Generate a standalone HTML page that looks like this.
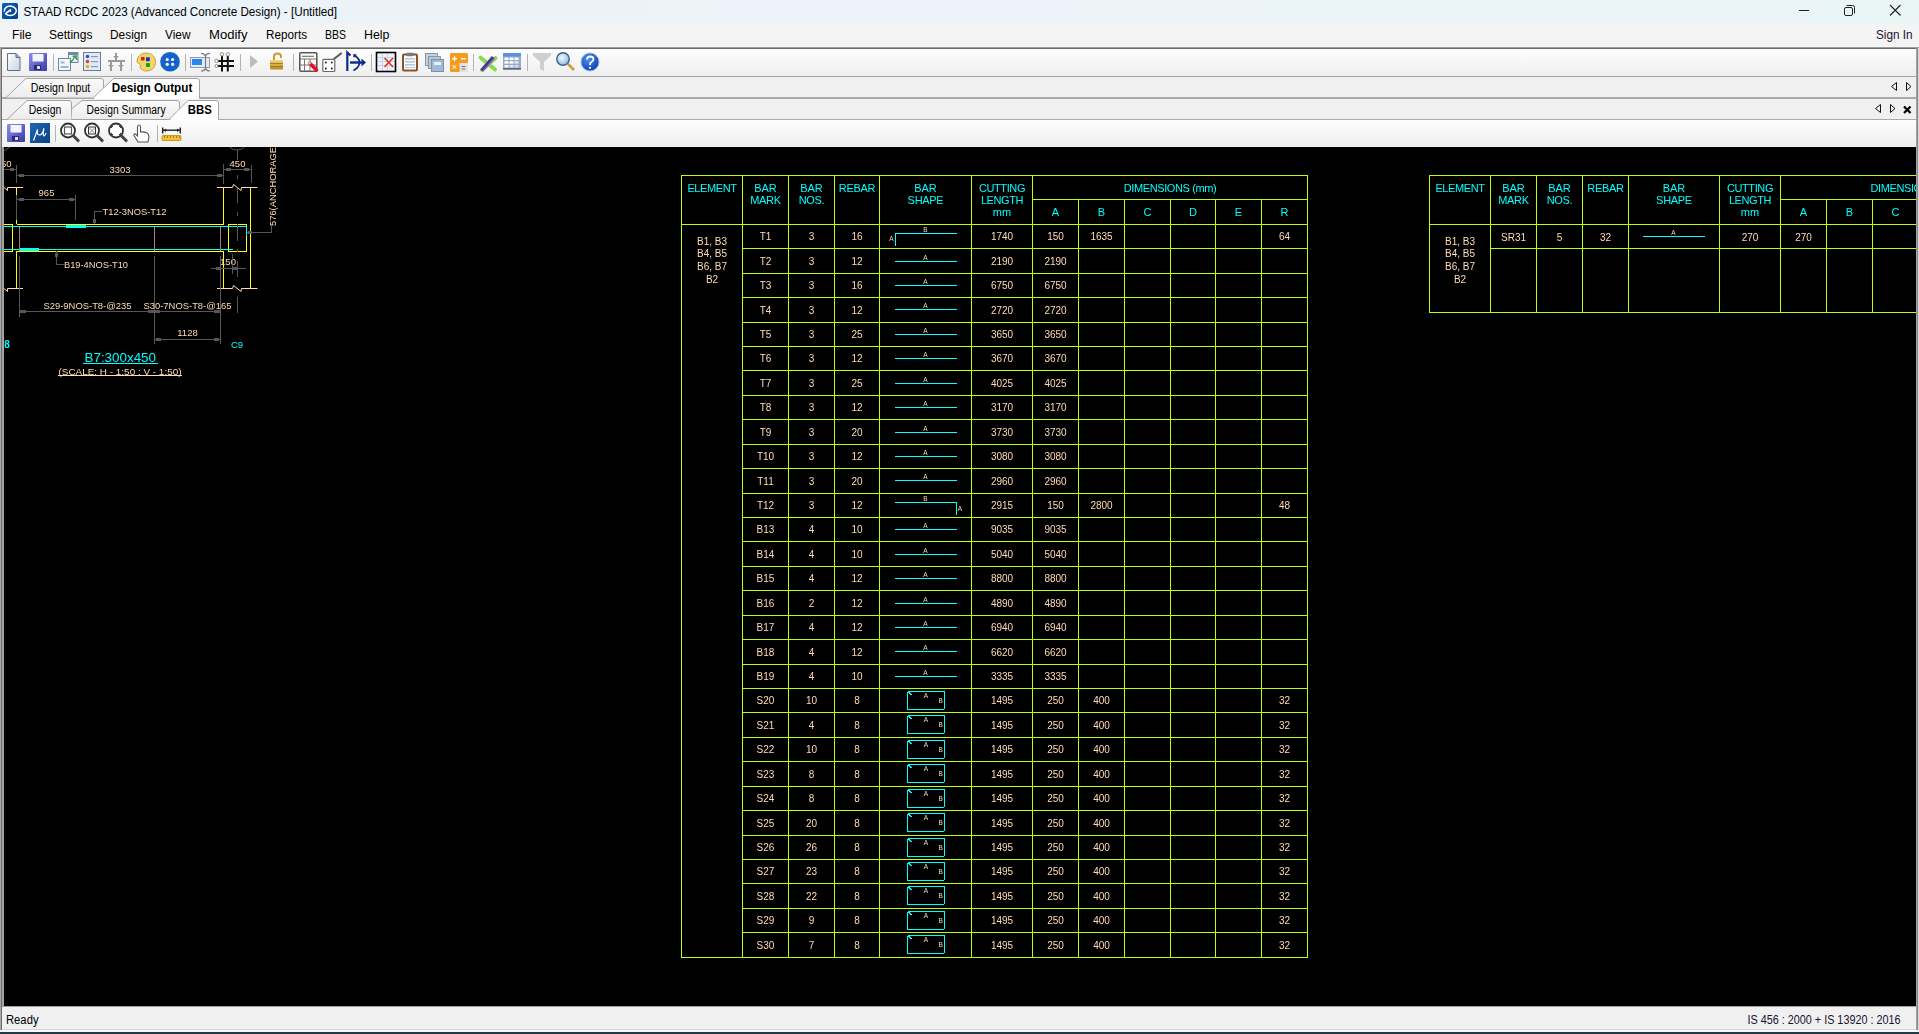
<!DOCTYPE html><html><head><meta charset="utf-8"><title>STAAD RCDC</title><style>html,body{margin:0;padding:0;}body{width:1919px;height:1034px;overflow:hidden;position:relative;background:#f0f0f0;font-family:"Liberation Sans",sans-serif;}text{font-family:"Liberation Sans",sans-serif;}</style></head><body><svg width="1919" height="1034" viewBox="0 0 1919 1034" style="position:absolute;left:0;top:0" font-family="Liberation Sans, sans-serif">
<clipPath id="cv"><rect x="4" y="147" width="1912" height="859"/></clipPath>
<defs><linearGradient id="tg" x1="0" x2="1" y1="0" y2="0"><stop offset="0" stop-color="#eaf3f7"/><stop offset="0.5" stop-color="#ecf3fa"/><stop offset="1" stop-color="#eaf5f6"/></linearGradient><linearGradient id="tb" x1="0" x2="0" y1="0" y2="1"><stop offset="0" stop-color="#fdfdfd"/><stop offset="1" stop-color="#efefef"/></linearGradient><linearGradient id="tab" x1="0" x2="0" y1="0" y2="1"><stop offset="0" stop-color="#fafafa"/><stop offset="1" stop-color="#ececec"/></linearGradient><linearGradient id="ic1" x1="0" x2="1" y1="0" y2="1"><stop offset="0" stop-color="#0b62b3"/><stop offset="1" stop-color="#063f8c"/></linearGradient></defs>
<rect x="0" y="0" width="1919" height="23" fill="url(#tg)"/>
<rect x="2" y="3" width="16" height="16" rx="1.6" fill="url(#ic1)"/>
<path d="M4.4 11.6 A6 4.7 0 1 1 5.6 13.7 L10.4 9.8 V11.9" stroke="#fff" stroke-width="1.5" fill="none" stroke-linejoin="round"/>
<text x="23.5" y="16" font-size="12" fill="#000" text-anchor="start" textLength="313.5" lengthAdjust="spacingAndGlyphs">STAAD RCDC 2023 (Advanced Concrete Design) - [Untitled]</text>
<rect x="1799" y="10" width="10" height="1" fill="#222"/>
<rect x="1844.5" y="7.5" width="8" height="8" rx="1.5" fill="none" stroke="#222" stroke-width="1"/>
<path d="M1846.5 5.5 H1852.5 Q1854.5 5.5 1854.5 7.5 V13.5" fill="none" stroke="#222" stroke-width="1"/>
<path d="M1890 5 L1900.5 15.5 M1900.5 5 L1890 15.5" stroke="#222" stroke-width="1.1"/>
<rect x="0" y="23" width="1919" height="24" fill="#f4f4f4"/>
<rect x="0" y="46" width="1919" height="1" fill="#f8f8f8"/>
<text x="12" y="38.7" font-size="12" fill="#000" text-anchor="start" textLength="19.5" lengthAdjust="spacingAndGlyphs">File</text>
<text x="49" y="38.7" font-size="12" fill="#000" text-anchor="start" textLength="43.5" lengthAdjust="spacingAndGlyphs">Settings</text>
<text x="110" y="38.7" font-size="12" fill="#000" text-anchor="start" textLength="37" lengthAdjust="spacingAndGlyphs">Design</text>
<text x="165" y="38.7" font-size="12" fill="#000" text-anchor="start" textLength="25.5" lengthAdjust="spacingAndGlyphs">View</text>
<text x="209" y="38.7" font-size="12" fill="#000" text-anchor="start" textLength="38.5" lengthAdjust="spacingAndGlyphs">Modify</text>
<text x="266" y="38.7" font-size="12" fill="#000" text-anchor="start" textLength="41" lengthAdjust="spacingAndGlyphs">Reports</text>
<text x="325" y="38.7" font-size="12" fill="#000" text-anchor="start" textLength="21" lengthAdjust="spacingAndGlyphs">BBS</text>
<text x="364" y="38.7" font-size="12" fill="#000" text-anchor="start" textLength="25.5" lengthAdjust="spacingAndGlyphs">Help</text>
<text x="1876" y="38.7" font-size="12" fill="#1a1030" text-anchor="start" textLength="36.5" lengthAdjust="spacingAndGlyphs">Sign In</text>
<rect x="0" y="47" width="1919" height="1" fill="#9c9c9c"/>
<rect x="0" y="48" width="1919" height="1" fill="#6a6a6a"/>
<rect x="2" y="49" width="1914" height="27" fill="url(#tb)"/>
<rect x="2" y="76" width="1914" height="1" fill="#a6a6a6"/>
<rect x="2" y="77" width="1914" height="20" fill="#f0f0f0"/>
<rect x="2" y="97" width="1914" height="2" fill="#a9a9a9"/>
<rect x="2" y="99" width="1914" height="20" fill="#f0f0f0"/>
<rect x="2" y="119" width="1914" height="1" fill="#a9a9a9"/>
<rect x="2" y="120" width="1914" height="27" fill="url(#tb)"/>
<rect x="0" y="48" width="1" height="983" fill="#a9a9a9"/>
<rect x="1" y="48" width="1" height="983" fill="#6c6c6c"/>
<rect x="1916" y="48" width="1" height="983" fill="#a0a0a0"/>
<rect x="1917" y="48" width="1" height="983" fill="#8c8c8c"/>
<rect x="1918" y="48" width="1" height="983" fill="#d4d4d4"/>
<path d="M6 97.5 L26 78.5 H101 Q103.5 78.5 103.5 81 V97.5" fill="url(#tab)" stroke="#a3a3a3" stroke-width="1"/>
<path d="M93 98 L113.5 78.5 H197 Q199.5 78.5 199.5 81 V98" fill="#ffffff" stroke="#a3a3a3" stroke-width="1"/>
<rect x="94" y="97" width="105" height="2" fill="#ffffff"/>
<text x="30.8" y="92" font-size="12" fill="#000" text-anchor="start" textLength="59.5" lengthAdjust="spacingAndGlyphs">Design Input</text>
<text x="111.8" y="92" font-size="12" fill="#000" text-anchor="start" font-weight="bold" textLength="80.5" lengthAdjust="spacingAndGlyphs">Design Output</text>
<path d="M7 119.5 L27 100.5 H69 Q71.5 100.5 71.5 103 V119.5" fill="url(#tab)" stroke="#a3a3a3" stroke-width="1"/>
<path d="M72 108.6 L82 100.5 H177 Q179.5 100.5 179.5 103 V119.5 H71.5" fill="url(#tab)" stroke="#a3a3a3" stroke-width="1"/>
<path d="M169 119.5 L188 100.5 H216 Q218.5 100.5 218.5 103 V119.5" fill="#ffffff" stroke="#a3a3a3" stroke-width="1"/>
<rect x="171" y="119" width="47" height="2" fill="#ffffff"/>
<text x="28.8" y="114" font-size="12" fill="#000" text-anchor="start" textLength="32.5" lengthAdjust="spacingAndGlyphs">Design</text>
<text x="86.6" y="114" font-size="12" fill="#000" text-anchor="start" textLength="79" lengthAdjust="spacingAndGlyphs">Design Summary</text>
<text x="187.8" y="114" font-size="12" fill="#000" text-anchor="start" font-weight="bold" textLength="24" lengthAdjust="spacingAndGlyphs">BBS</text>
<path d="M1896.5 82.5 V90.5 L1891.5 86.5 Z M1906.5 82.5 V90.5 L1911 86.5 Z" fill="none" stroke="#111" stroke-width="1"/>
<path d="M1880.5 104.5 V112.5 L1875.5 108.5 Z M1890.5 104.5 V112.5 L1895 108.5 Z" fill="none" stroke="#111" stroke-width="1"/>
<path d="M1904 106.5 L1910.5 113 M1910.5 106.5 L1904 113" stroke="#000" stroke-width="2.2"/>
<rect x="4" y="147" width="1912" height="859" fill="#000"/>
<rect x="2" y="147" width="2" height="860" fill="#a3a3a3"/>
<rect x="2" y="1006" width="1914" height="1" fill="#a0a0a0"/>
<rect x="2" y="1007" width="1914" height="22" fill="#f0f0f0"/>
<rect x="2" y="1029" width="1914" height="1" fill="#d8d8d8"/>
<rect x="0" y="1030" width="1919" height="2" fill="#f6f6f6"/>
<rect x="0" y="1032" width="1919" height="2" fill="#1d3b42"/>
<text x="6" y="1024" font-size="12" fill="#000" text-anchor="start" textLength="32.5" lengthAdjust="spacingAndGlyphs">Ready</text>
<text x="1747.5" y="1024" font-size="12" fill="#1a1030" text-anchor="start" textLength="153" lengthAdjust="spacingAndGlyphs">IS 456 : 2000 + IS 13920 : 2016</text>
<defs><linearGradient id="gDoc" x1="0" y1="0" x2="1" y2="1"><stop offset="0" stop-color="#ffffff"/><stop offset="1" stop-color="#c9d3e0"/></linearGradient><linearGradient id="gFlop" x1="0" y1="0" x2="1" y2="1"><stop offset="0" stop-color="#8f8ff0"/><stop offset="1" stop-color="#3a3aa8"/></linearGradient><linearGradient id="gBlueC" x1="0" y1="0" x2="0" y2="1"><stop offset="0" stop-color="#2f7be0"/><stop offset="1" stop-color="#1852b8"/></linearGradient><linearGradient id="gGold" x1="0" y1="0" x2="0" y2="1"><stop offset="0" stop-color="#f3d77a"/><stop offset="1" stop-color="#b8891c"/></linearGradient><linearGradient id="gMu" x1="0" y1="0" x2="1" y2="1"><stop offset="0" stop-color="#1b68b8"/><stop offset="1" stop-color="#0a3f86"/></linearGradient><radialGradient id="gLens" cx="0.4" cy="0.4" r="0.6"><stop offset="0" stop-color="#f4fbff"/><stop offset="1" stop-color="#8fc0e8"/></radialGradient><radialGradient id="gHelp" cx="0.4" cy="0.35" r="0.7"><stop offset="0" stop-color="#4f8ff0"/><stop offset="1" stop-color="#0b3fb0"/></radialGradient></defs>
<path d="M7.5 53.5 H16 L20 57.5 V70.5 H7.5 Z" fill="url(#gDoc)" stroke="#5b6f8c" stroke-width="1"/>
<path d="M16 53.5 V57.5 H20" fill="#9aaccc" stroke="#5b6f8c" stroke-width="1"/>
<rect x="29" y="53" width="18" height="18" rx="1" fill="url(#gFlop)"/>
<rect x="32.5" y="54" width="11" height="7.5" fill="#f4f4ff"/>
<rect x="34" y="65" width="7" height="5" fill="#2a2a70"/>
<rect x="37" y="66" width="3" height="3" fill="#e0e0f0"/>
<rect x="53" y="54" width="1" height="17" fill="#b4b4b4"/>
<rect x="68.5" y="52.5" width="9.5" height="10" fill="#e8f0fa" stroke="#6d87ad"/>
<rect x="68.5" y="52.5" width="9.5" height="2.5" fill="#6d87ad"/>
<rect x="58.5" y="58.5" width="12" height="12" fill="#f4f8fd" stroke="#6d87ad"/>
<rect x="60.5" y="61.5" width="4" height="2" fill="#9fb4d0"/><rect x="60.5" y="66" width="8" height="2" fill="#9fb4d0"/>
<path d="M70 63 Q73 61 74.5 57.5 L77 60 L76.5 55.5 L72.5 56 L74 57.5 Q72.5 60.5 69.5 62" fill="#3cb043" stroke="#2a8a30" stroke-width="0.6"/>
<rect x="83.5" y="52.5" width="17" height="18" fill="#dfeaf8" stroke="#6b7f99"/>
<circle cx="87.5" cy="56.5" r="1.8" fill="#2f52d0"/>
<rect x="91" y="56" width="7" height="1.2" fill="#8a9ab0"/>
<circle cx="87.5" cy="61.5" r="1.8" fill="#e04020"/>
<rect x="91" y="61" width="7" height="1.2" fill="#8a9ab0"/>
<circle cx="87.5" cy="66.5" r="1.8" fill="#e8b020"/>
<rect x="91" y="66" width="7" height="1.2" fill="#8a9ab0"/>
<g fill="#9a9a9a"><rect x="115" y="53" width="2" height="7"/><rect x="108" y="60" width="17" height="2"/><rect x="110" y="62" width="2" height="9"/><rect x="120" y="62" width="2" height="9"/><path d="M113 56 H119 L116 59Z M108 65 H114 L111 68Z M118 65 H124 L121 68Z"/></g>
<rect x="131" y="54" width="1" height="17" fill="#b4b4b4"/>
<path d="M146 53 C151.5 53 155.5 56.5 155.5 62 C155.5 67.5 151.5 71 146.5 71 C142 71 139.5 68.5 140.5 66 C141 64 138 64 137.2 62 C136.5 57 140.5 53 146 53 Z" fill="#f0d66a" stroke="#c9a13a" stroke-width="1"/>
<rect x="141" y="57" width="3.6" height="3.6" rx="0.8" fill="#d8200c"/><rect x="146" y="57.2" width="3.8" height="4" rx="0.8" fill="#1030c0"/><rect x="146" y="63" width="4" height="4" rx="0.8" fill="#18a018"/>
<circle cx="170" cy="61.8" r="9.8" fill="#1462cc"/>
<g fill="#fff"><circle cx="167.2" cy="59.5" r="1.6"/><circle cx="172.6" cy="59.5" r="1.6"/><circle cx="167.2" cy="64.3" r="1.6"/><circle cx="172.6" cy="64.3" r="1.6"/></g>
<rect x="185" y="54" width="1" height="17" fill="#b4b4b4"/>
<rect x="190.5" y="57.5" width="19" height="10" fill="#e4ebf5" stroke="#8e9ab8"/>
<rect x="192" y="59" width="10" height="6" fill="#2b86e6"/>
<path d="M201 53.3 Q204.5 53.3 205.5 56 Q206.5 53.3 210 53.3 M205.5 56 V68.5 M201 71 Q204.5 71 205.5 68.5 Q206.5 71 210 71" fill="none" stroke="#7a7a7a" stroke-width="1.2"/>
<g stroke="#111" stroke-width="2"><path d="M222 56 V71.5 M227.8 56 V71.5 M218 61 H234 M218 66 H234"/></g>
<g fill="#fff" stroke="#777" stroke-width="0.8"><circle cx="222" cy="54.3" r="1.7"/><circle cx="227.8" cy="54.3" r="1.7"/><circle cx="216.5" cy="60.8" r="1.7"/><circle cx="216.5" cy="66" r="1.5"/></g>
<rect x="240" y="54" width="1" height="17" fill="#b4b4b4"/>
<path d="M250 55 L258 61.5 L250 68 Z" fill="#bdbdbd"/>
<path d="M274 60 V56.5 Q274 53.5 277.5 53.5 Q281 53.5 281 56.5 V58" fill="none" stroke="#c9a030" stroke-width="2"/>
<rect x="270" y="60" width="13" height="9.5" rx="1" fill="url(#gGold)"/>
<g fill="#9a7418"><rect x="270" y="63" width="13" height="0.8"/><rect x="270" y="66" width="13" height="0.8"/></g>
<rect x="293" y="54" width="1" height="17" fill="#b4b4b4"/>
<rect x="299.8" y="52.8" width="17" height="18.4" rx="1" fill="#fff" stroke="#5a5a5a" stroke-width="1.6"/>
<g fill="#777"><rect x="302" y="55.7" width="12" height="1.2"/><rect x="300" y="58.5" width="16.5" height="1"/><rect x="300" y="64.5" width="16.5" height="1"/><rect x="304" y="59" width="1" height="12"/><rect x="309.5" y="59" width="1" height="12"/></g>
<path d="M310 63.5 L316.5 70" stroke="#e0101c" stroke-width="3.6" stroke-linecap="round"/><path d="M308 61.5 L310.5 64" stroke="#d8c0a0" stroke-width="2.4"/>
<rect x="322.8" y="59.3" width="12" height="12.2" rx="1" fill="#fff" stroke="#6a6a6a" stroke-width="1.2"/>
<g fill="#111"><circle cx="325.8" cy="62.5" r="0.9"/><circle cx="331.8" cy="62.5" r="0.9"/><circle cx="325.8" cy="68.5" r="0.9"/><circle cx="331.8" cy="68.5" r="0.9"/></g>
<path d="M334.5 58.5 L341 53.5" stroke="#5a5a5a" stroke-width="2.2" stroke-linecap="round"/>
<g stroke="#0c2a8c" fill="none"><path d="M347.3 71 V52.5 L350.5 55.5" stroke-width="2.2"/><path d="M350 62.5 H363" stroke-width="2.4"/><path d="M354.5 55.5 Q360 59 359.5 63 Q359 67.5 353.5 70.5" stroke-width="1.8"/></g>
<path d="M361.5 58.5 L366 62.5 L361.5 66.5 Z" fill="#0c2a8c"/><rect x="353.3" y="54.2" width="3" height="3" fill="#0c2a8c"/>
<rect x="371" y="54" width="1" height="17" fill="#b4b4b4"/>
<rect x="376.5" y="52.5" width="19" height="19" fill="#eef3fa" stroke="#000" stroke-width="1.6"/>
<g fill="#c8d4e4"><rect x="378" y="57" width="16" height="1"/><rect x="378" y="61" width="16" height="1"/><rect x="378" y="65" width="16" height="1"/><rect x="382" y="54" width="1" height="16"/><rect x="387" y="54" width="1" height="16"/></g>
<path d="M384.5 58 L393 67 M393 58 L384.5 67" stroke="#e83020" stroke-width="1.6"/>
<rect x="403" y="54.5" width="14" height="16" rx="1" fill="#fff" stroke="#8a5426" stroke-width="2"/>
<rect x="406.5" y="52.8" width="7" height="3.4" rx="0.8" fill="#7a7a7a"/>
<g fill="#b4c8da"><rect x="405" y="58" width="10" height="1.6"/><rect x="405" y="61" width="10" height="1.6"/><rect x="405" y="64" width="10" height="1.6"/><rect x="405" y="67" width="10" height="1"/></g>
<rect x="425.5" y="53.5" width="12" height="12" fill="#c7d1da" stroke="#8797a6"/>
<rect x="428.5" y="56.5" width="12" height="12" fill="#b8c8d6" stroke="#8797a6"/>
<rect x="431.5" y="59.5" width="12" height="12" fill="#9fbad2" stroke="#7e93a8"/>
<rect x="434" y="62" width="7" height="3" fill="#e8f0f8"/>
<rect x="450" y="53" width="18" height="19" rx="1.5" fill="#f59a1a"/>
<rect x="459.5" y="63" width="8.5" height="9" fill="#e2e2e2"/>
<g fill="#fff"><rect x="452" y="58" width="5" height="1.4"/><rect x="453.8" y="56.2" width="1.4" height="5"/><rect x="461" y="58" width="5" height="1.4"/></g>
<path d="M452.5 65 L456.5 69 M456.5 65 L452.5 69" stroke="#fff" stroke-width="1"/>
<g fill="#777"><rect x="461.5" y="66" width="4" height="1"/><rect x="461.5" y="68.5" width="4" height="1"/></g>
<rect x="473" y="54" width="1" height="17" fill="#b4b4b4"/>
<path d="M480.5 57.5 L495 69.5 M495.5 58 L482 70" stroke="#86dc52" stroke-width="4" stroke-linecap="round"/>
<path d="M485 56.5 H491" stroke="#ffffff" stroke-width="2.5"/>
<path d="M481.5 70.5 L493 57" stroke="#3a3a8a" stroke-width="3"/><path d="M483 71 L494.5 58" stroke="#9a50c8" stroke-width="1.3"/>
<rect x="503" y="53" width="18" height="16.5" rx="1" fill="#9aaac0"/>
<rect x="503" y="53" width="18" height="3.5" rx="1" fill="#5a8ee8"/>
<g fill="#ffffff"><rect x="504.5" y="57.5" width="4" height="2.5"/><rect x="509.5" y="57.5" width="4" height="2.5"/><rect x="514.5" y="57.5" width="4" height="2.5"/><rect x="504.5" y="61.2" width="4" height="2.5"/><rect x="509.5" y="61.2" width="4" height="2.5"/><rect x="514.5" y="61.2" width="4" height="2.5" fill="#dde8f8"/><rect x="504.5" y="65" width="4" height="2.5"/><rect x="509.5" y="65" width="4" height="2.5" fill="#dde8f8"/><rect x="514.5" y="65" width="4" height="2.5" fill="#c8dcf8"/></g>
<rect x="503" y="68.3" width="18" height="1.2" fill="#3e4e6a"/>
<rect x="527" y="54" width="1" height="17" fill="#b4b4b4"/>
<path d="M533 53 H551 V55.5 L544 62 V71 L540 69 V62 L533 55.5 Z" fill="#cfcfcf"/>
<circle cx="563" cy="59" r="6.2" fill="url(#gLens)" stroke="#3a5f90" stroke-width="1.4"/>
<path d="M567.5 63.5 L574 70" stroke="#c8a040" stroke-width="2.6"/>
<circle cx="590" cy="62" r="9" fill="url(#gHelp)" stroke="#9ab8e8" stroke-width="1"/>
<path d="M587 59.5 Q587 56.5 590.3 56.5 Q593.5 56.5 593.5 59.2 Q593.5 61 591 62.3 Q590 63 590 65" fill="none" stroke="#fff" stroke-width="1.8"/>
<circle cx="590" cy="67.8" r="1.1" fill="#fff"/>
<rect x="7" y="124" width="18" height="18" rx="1" fill="url(#gFlop)"/>
<rect x="10.5" y="125" width="11" height="7.5" fill="#f4f4ff"/>
<rect x="12" y="136" width="7" height="5" fill="#2a2a70"/>
<rect x="15" y="137" width="3" height="3" fill="#e0e0f0"/>
<rect x="30" y="123" width="20" height="20" fill="url(#gMu)"/>
<path d="M33.5 140.5 Q36 134 37.5 129.5 M37.5 129.5 Q36.5 135 39.5 135 Q42.5 135 44 128.5 M44 128.5 Q42.5 134 44 136 Q45.5 135.5 46 133" fill="none" stroke="#fff" stroke-width="1.2"/>
<rect x="55" y="125" width="1" height="17" fill="#b4b4b4"/>
<circle cx="68" cy="130.5" r="7" fill="#fff" stroke="#333" stroke-width="1.8"/>
<path d="M73 135.5 L79 141.5" stroke="#444" stroke-width="3"/>
<rect x="64.5" y="127" width="7" height="7" fill="#fff" stroke="#555" stroke-width="1.2"/>
<circle cx="92" cy="130.5" r="7" fill="#fff" stroke="#333" stroke-width="1.8"/>
<path d="M97 135.5 L103 141.5" stroke="#444" stroke-width="3"/>
<rect x="88.5" y="127" width="7" height="7" fill="none" stroke="#333" stroke-width="1"/><path d="M89 127.5 L95 133.5 M95 127.5 L89 133.5" stroke="#666" stroke-width="0.8"/>
<circle cx="116" cy="130.5" r="7" fill="#fff" stroke="#333" stroke-width="1.8"/>
<path d="M121 135.5 L127 141.5" stroke="#444" stroke-width="3"/>
<path d="M111.5 128 V126.5 H113 M119 126.5 H120.5 V128 M120.5 133 V134.5 H119 M113 134.5 H111.5 V133" fill="none" stroke="#333" stroke-width="1"/>
<path d="M138 142 L134 135.5 Q133.5 133.5 135.5 134 L137.5 136 V127 Q137.5 125 139 125 Q140.5 125 140.5 127 V132 Q144 131.5 147 133 Q149 134 149 137 L148 142 Z" fill="#fff" stroke="#555" stroke-width="1.1"/>
<rect x="157" y="125" width="1" height="17" fill="#b4b4b4"/>
<g fill="#222"><rect x="162" y="129.5" width="19" height="1.4"/><rect x="162" y="127.5" width="1.4" height="6"/><rect x="179.6" y="127.5" width="1.4" height="6"/><path d="M163.5 130.2 L166 128.5 V132Z M179.5 130.2 L177 128.5 V132Z"/></g>
<rect x="162" y="135.5" width="19" height="5" rx="1" fill="#f2c230" stroke="#b88a10" stroke-width="0.8"/>
<g fill="#9a6a00"><rect x="164" y="136" width="0.8" height="2"/><rect x="167" y="136" width="0.8" height="2"/><rect x="170" y="136" width="0.8" height="2"/><rect x="173" y="136" width="0.8" height="2"/><rect x="176" y="136" width="0.8" height="2"/><rect x="179" y="136" width="0.8" height="2"/></g>
</svg>
<svg width="1919" height="1034" viewBox="0 0 1919 1034" style="position:absolute;left:0;top:0;will-change:transform" font-family="Liberation Sans, sans-serif">
<clipPath id="cv2"><rect x="4" y="147" width="1912" height="859"/></clipPath>
<g shape-rendering="crispEdges" clip-path="url(#cv2)">
<rect x="681" y="175" width="627" height="1" fill="#bfff00"/>
<rect x="681" y="224" width="627" height="1" fill="#bfff00"/>
<rect x="1032" y="199" width="276" height="1" fill="#bfff00"/>
<text x="712.0" y="192" font-size="11" fill="#00ffff" text-anchor="middle" letter-spacing="-0.4">ELEMENT</text>
<text x="765.5" y="192" font-size="11" fill="#00ffff" text-anchor="middle" >BAR</text>
<text x="765.5" y="204" font-size="11" fill="#00ffff" text-anchor="middle" letter-spacing="-0.3">MARK</text>
<text x="811.5" y="192" font-size="11" fill="#00ffff" text-anchor="middle" >BAR</text>
<text x="811.5" y="204" font-size="11" fill="#00ffff" text-anchor="middle" letter-spacing="-0.3">NOS.</text>
<text x="857.0" y="192" font-size="11" fill="#00ffff" text-anchor="middle" letter-spacing="-0.3">REBAR</text>
<text x="925.5" y="192" font-size="11" fill="#00ffff" text-anchor="middle" >BAR</text>
<text x="925.5" y="204" font-size="11" fill="#00ffff" text-anchor="middle" letter-spacing="-0.3">SHAPE</text>
<text x="1002.0" y="192" font-size="11" fill="#00ffff" text-anchor="middle" letter-spacing="-0.4">CUTTING</text>
<text x="1002.0" y="204" font-size="11" fill="#00ffff" text-anchor="middle" letter-spacing="-0.4">LENGTH</text>
<text x="1002.0" y="216" font-size="11" fill="#00ffff" text-anchor="middle" >mm</text>
<text x="1170.0" y="192" font-size="11" fill="#00ffff" text-anchor="middle" letter-spacing="-0.4">DIMENSIONS (mm)</text>
<text x="1055.5" y="216" font-size="11" fill="#00ffff" text-anchor="middle" >A</text>
<text x="1101.5" y="216" font-size="11" fill="#00ffff" text-anchor="middle" >B</text>
<text x="1147.5" y="216" font-size="11" fill="#00ffff" text-anchor="middle" >C</text>
<text x="1193.0" y="216" font-size="11" fill="#00ffff" text-anchor="middle" >D</text>
<text x="1238.5" y="216" font-size="11" fill="#00ffff" text-anchor="middle" >E</text>
<text x="1284.5" y="216" font-size="11" fill="#00ffff" text-anchor="middle" >R</text>
<rect x="681" y="175" width="1" height="783" fill="#bfff00"/>
<rect x="742" y="175" width="1" height="783" fill="#bfff00"/>
<rect x="788" y="175" width="1" height="783" fill="#bfff00"/>
<rect x="834" y="175" width="1" height="783" fill="#bfff00"/>
<rect x="879" y="175" width="1" height="783" fill="#bfff00"/>
<rect x="971" y="175" width="1" height="783" fill="#bfff00"/>
<rect x="1032" y="175" width="1" height="783" fill="#bfff00"/>
<rect x="1078" y="199" width="1" height="759" fill="#bfff00"/>
<rect x="1124" y="199" width="1" height="759" fill="#bfff00"/>
<rect x="1170" y="199" width="1" height="759" fill="#bfff00"/>
<rect x="1215" y="199" width="1" height="759" fill="#bfff00"/>
<rect x="1261" y="199" width="1" height="759" fill="#bfff00"/>
<rect x="1307" y="175" width="1" height="783" fill="#bfff00"/>
<rect x="681" y="957" width="627" height="1" fill="#bfff00"/>
<rect x="742" y="248" width="566" height="1" fill="#bfff00"/>
<rect x="742" y="273" width="566" height="1" fill="#bfff00"/>
<rect x="742" y="297" width="566" height="1" fill="#bfff00"/>
<rect x="742" y="322" width="566" height="1" fill="#bfff00"/>
<rect x="742" y="346" width="566" height="1" fill="#bfff00"/>
<rect x="742" y="370" width="566" height="1" fill="#bfff00"/>
<rect x="742" y="395" width="566" height="1" fill="#bfff00"/>
<rect x="742" y="419" width="566" height="1" fill="#bfff00"/>
<rect x="742" y="444" width="566" height="1" fill="#bfff00"/>
<rect x="742" y="468" width="566" height="1" fill="#bfff00"/>
<rect x="742" y="493" width="566" height="1" fill="#bfff00"/>
<rect x="742" y="517" width="566" height="1" fill="#bfff00"/>
<rect x="742" y="541" width="566" height="1" fill="#bfff00"/>
<rect x="742" y="566" width="566" height="1" fill="#bfff00"/>
<rect x="742" y="590" width="566" height="1" fill="#bfff00"/>
<rect x="742" y="615" width="566" height="1" fill="#bfff00"/>
<rect x="742" y="639" width="566" height="1" fill="#bfff00"/>
<rect x="742" y="664" width="566" height="1" fill="#bfff00"/>
<rect x="742" y="688" width="566" height="1" fill="#bfff00"/>
<rect x="742" y="712" width="566" height="1" fill="#bfff00"/>
<rect x="742" y="737" width="566" height="1" fill="#bfff00"/>
<rect x="742" y="761" width="566" height="1" fill="#bfff00"/>
<rect x="742" y="786" width="566" height="1" fill="#bfff00"/>
<rect x="742" y="810" width="566" height="1" fill="#bfff00"/>
<rect x="742" y="835" width="566" height="1" fill="#bfff00"/>
<rect x="742" y="859" width="566" height="1" fill="#bfff00"/>
<rect x="742" y="883" width="566" height="1" fill="#bfff00"/>
<rect x="742" y="908" width="566" height="1" fill="#bfff00"/>
<rect x="742" y="932" width="566" height="1" fill="#bfff00"/>
<text x="765.5" y="240.3" font-size="10" fill="#ffdcb4" text-anchor="middle" >T1</text>
<text x="811.5" y="240.3" font-size="10" fill="#ffdcb4" text-anchor="middle" >3</text>
<text x="857.0" y="240.3" font-size="10" fill="#ffdcb4" text-anchor="middle" >16</text>
<text x="1002.0" y="240.3" font-size="10" fill="#ffdcb4" text-anchor="middle" >1740</text>
<text x="1055.5" y="240.3" font-size="10" fill="#ffdcb4" text-anchor="middle" >150</text>
<text x="1101.5" y="240.3" font-size="10" fill="#ffdcb4" text-anchor="middle" >1635</text>
<text x="1284.5" y="240.3" font-size="10" fill="#ffdcb4" text-anchor="middle" >64</text>
<rect x="895" y="233" width="62" height="1" fill="#00ffff"/>
<rect x="895" y="233" width="1" height="13" fill="#00ffff"/>
<text x="925.5" y="232.2" font-size="6.5" fill="#ffdcb4" text-anchor="middle" >B</text>
<text x="891.5" y="241.2" font-size="6.5" fill="#ffdcb4" text-anchor="middle" >A</text>
<text x="765.5" y="264.8" font-size="10" fill="#ffdcb4" text-anchor="middle" >T2</text>
<text x="811.5" y="264.8" font-size="10" fill="#ffdcb4" text-anchor="middle" >3</text>
<text x="857.0" y="264.8" font-size="10" fill="#ffdcb4" text-anchor="middle" >12</text>
<text x="1002.0" y="264.8" font-size="10" fill="#ffdcb4" text-anchor="middle" >2190</text>
<text x="1055.5" y="264.8" font-size="10" fill="#ffdcb4" text-anchor="middle" >2190</text>
<rect x="895" y="261" width="62" height="1" fill="#00ffff"/>
<text x="925.5" y="259.8" font-size="6.5" fill="#ffdcb4" text-anchor="middle" >A</text>
<text x="765.5" y="289.3" font-size="10" fill="#ffdcb4" text-anchor="middle" >T3</text>
<text x="811.5" y="289.3" font-size="10" fill="#ffdcb4" text-anchor="middle" >3</text>
<text x="857.0" y="289.3" font-size="10" fill="#ffdcb4" text-anchor="middle" >16</text>
<text x="1002.0" y="289.3" font-size="10" fill="#ffdcb4" text-anchor="middle" >6750</text>
<text x="1055.5" y="289.3" font-size="10" fill="#ffdcb4" text-anchor="middle" >6750</text>
<rect x="895" y="285" width="62" height="1" fill="#00ffff"/>
<text x="925.5" y="283.8" font-size="6.5" fill="#ffdcb4" text-anchor="middle" >A</text>
<text x="765.5" y="313.8" font-size="10" fill="#ffdcb4" text-anchor="middle" >T4</text>
<text x="811.5" y="313.8" font-size="10" fill="#ffdcb4" text-anchor="middle" >3</text>
<text x="857.0" y="313.8" font-size="10" fill="#ffdcb4" text-anchor="middle" >12</text>
<text x="1002.0" y="313.8" font-size="10" fill="#ffdcb4" text-anchor="middle" >2720</text>
<text x="1055.5" y="313.8" font-size="10" fill="#ffdcb4" text-anchor="middle" >2720</text>
<rect x="895" y="309" width="62" height="1" fill="#00ffff"/>
<text x="925.5" y="307.8" font-size="6.5" fill="#ffdcb4" text-anchor="middle" >A</text>
<text x="765.5" y="338.3" font-size="10" fill="#ffdcb4" text-anchor="middle" >T5</text>
<text x="811.5" y="338.3" font-size="10" fill="#ffdcb4" text-anchor="middle" >3</text>
<text x="857.0" y="338.3" font-size="10" fill="#ffdcb4" text-anchor="middle" >25</text>
<text x="1002.0" y="338.3" font-size="10" fill="#ffdcb4" text-anchor="middle" >3650</text>
<text x="1055.5" y="338.3" font-size="10" fill="#ffdcb4" text-anchor="middle" >3650</text>
<rect x="895" y="334" width="62" height="1" fill="#00ffff"/>
<text x="925.5" y="332.8" font-size="6.5" fill="#ffdcb4" text-anchor="middle" >A</text>
<text x="765.5" y="362.3" font-size="10" fill="#ffdcb4" text-anchor="middle" >T6</text>
<text x="811.5" y="362.3" font-size="10" fill="#ffdcb4" text-anchor="middle" >3</text>
<text x="857.0" y="362.3" font-size="10" fill="#ffdcb4" text-anchor="middle" >12</text>
<text x="1002.0" y="362.3" font-size="10" fill="#ffdcb4" text-anchor="middle" >3670</text>
<text x="1055.5" y="362.3" font-size="10" fill="#ffdcb4" text-anchor="middle" >3670</text>
<rect x="895" y="358" width="62" height="1" fill="#00ffff"/>
<text x="925.5" y="356.8" font-size="6.5" fill="#ffdcb4" text-anchor="middle" >A</text>
<text x="765.5" y="386.8" font-size="10" fill="#ffdcb4" text-anchor="middle" >T7</text>
<text x="811.5" y="386.8" font-size="10" fill="#ffdcb4" text-anchor="middle" >3</text>
<text x="857.0" y="386.8" font-size="10" fill="#ffdcb4" text-anchor="middle" >25</text>
<text x="1002.0" y="386.8" font-size="10" fill="#ffdcb4" text-anchor="middle" >4025</text>
<text x="1055.5" y="386.8" font-size="10" fill="#ffdcb4" text-anchor="middle" >4025</text>
<rect x="895" y="383" width="62" height="1" fill="#00ffff"/>
<text x="925.5" y="381.8" font-size="6.5" fill="#ffdcb4" text-anchor="middle" >A</text>
<text x="765.5" y="411.3" font-size="10" fill="#ffdcb4" text-anchor="middle" >T8</text>
<text x="811.5" y="411.3" font-size="10" fill="#ffdcb4" text-anchor="middle" >3</text>
<text x="857.0" y="411.3" font-size="10" fill="#ffdcb4" text-anchor="middle" >12</text>
<text x="1002.0" y="411.3" font-size="10" fill="#ffdcb4" text-anchor="middle" >3170</text>
<text x="1055.5" y="411.3" font-size="10" fill="#ffdcb4" text-anchor="middle" >3170</text>
<rect x="895" y="407" width="62" height="1" fill="#00ffff"/>
<text x="925.5" y="405.8" font-size="6.5" fill="#ffdcb4" text-anchor="middle" >A</text>
<text x="765.5" y="435.8" font-size="10" fill="#ffdcb4" text-anchor="middle" >T9</text>
<text x="811.5" y="435.8" font-size="10" fill="#ffdcb4" text-anchor="middle" >3</text>
<text x="857.0" y="435.8" font-size="10" fill="#ffdcb4" text-anchor="middle" >20</text>
<text x="1002.0" y="435.8" font-size="10" fill="#ffdcb4" text-anchor="middle" >3730</text>
<text x="1055.5" y="435.8" font-size="10" fill="#ffdcb4" text-anchor="middle" >3730</text>
<rect x="895" y="432" width="62" height="1" fill="#00ffff"/>
<text x="925.5" y="430.8" font-size="6.5" fill="#ffdcb4" text-anchor="middle" >A</text>
<text x="765.5" y="460.3" font-size="10" fill="#ffdcb4" text-anchor="middle" >T10</text>
<text x="811.5" y="460.3" font-size="10" fill="#ffdcb4" text-anchor="middle" >3</text>
<text x="857.0" y="460.3" font-size="10" fill="#ffdcb4" text-anchor="middle" >12</text>
<text x="1002.0" y="460.3" font-size="10" fill="#ffdcb4" text-anchor="middle" >3080</text>
<text x="1055.5" y="460.3" font-size="10" fill="#ffdcb4" text-anchor="middle" >3080</text>
<rect x="895" y="456" width="62" height="1" fill="#00ffff"/>
<text x="925.5" y="454.8" font-size="6.5" fill="#ffdcb4" text-anchor="middle" >A</text>
<text x="765.5" y="484.8" font-size="10" fill="#ffdcb4" text-anchor="middle" >T11</text>
<text x="811.5" y="484.8" font-size="10" fill="#ffdcb4" text-anchor="middle" >3</text>
<text x="857.0" y="484.8" font-size="10" fill="#ffdcb4" text-anchor="middle" >20</text>
<text x="1002.0" y="484.8" font-size="10" fill="#ffdcb4" text-anchor="middle" >2960</text>
<text x="1055.5" y="484.8" font-size="10" fill="#ffdcb4" text-anchor="middle" >2960</text>
<rect x="895" y="480" width="62" height="1" fill="#00ffff"/>
<text x="925.5" y="478.8" font-size="6.5" fill="#ffdcb4" text-anchor="middle" >A</text>
<text x="765.5" y="509.3" font-size="10" fill="#ffdcb4" text-anchor="middle" >T12</text>
<text x="811.5" y="509.3" font-size="10" fill="#ffdcb4" text-anchor="middle" >3</text>
<text x="857.0" y="509.3" font-size="10" fill="#ffdcb4" text-anchor="middle" >12</text>
<text x="1002.0" y="509.3" font-size="10" fill="#ffdcb4" text-anchor="middle" >2915</text>
<text x="1055.5" y="509.3" font-size="10" fill="#ffdcb4" text-anchor="middle" >150</text>
<text x="1101.5" y="509.3" font-size="10" fill="#ffdcb4" text-anchor="middle" >2800</text>
<text x="1284.5" y="509.3" font-size="10" fill="#ffdcb4" text-anchor="middle" >48</text>
<rect x="895" y="502" width="62" height="1" fill="#00ffff"/>
<rect x="956" y="502" width="1" height="13" fill="#00ffff"/>
<text x="925.5" y="500.9" font-size="6.5" fill="#ffdcb4" text-anchor="middle" >B</text>
<text x="960" y="511" font-size="6.5" fill="#ffdcb4" text-anchor="middle" >A</text>
<text x="765.5" y="533.3" font-size="10" fill="#ffdcb4" text-anchor="middle" >B13</text>
<text x="811.5" y="533.3" font-size="10" fill="#ffdcb4" text-anchor="middle" >4</text>
<text x="857.0" y="533.3" font-size="10" fill="#ffdcb4" text-anchor="middle" >10</text>
<text x="1002.0" y="533.3" font-size="10" fill="#ffdcb4" text-anchor="middle" >9035</text>
<text x="1055.5" y="533.3" font-size="10" fill="#ffdcb4" text-anchor="middle" >9035</text>
<rect x="895" y="529" width="62" height="1" fill="#00ffff"/>
<text x="925.5" y="527.8" font-size="6.5" fill="#ffdcb4" text-anchor="middle" >A</text>
<text x="765.5" y="557.8" font-size="10" fill="#ffdcb4" text-anchor="middle" >B14</text>
<text x="811.5" y="557.8" font-size="10" fill="#ffdcb4" text-anchor="middle" >4</text>
<text x="857.0" y="557.8" font-size="10" fill="#ffdcb4" text-anchor="middle" >10</text>
<text x="1002.0" y="557.8" font-size="10" fill="#ffdcb4" text-anchor="middle" >5040</text>
<text x="1055.5" y="557.8" font-size="10" fill="#ffdcb4" text-anchor="middle" >5040</text>
<rect x="895" y="554" width="62" height="1" fill="#00ffff"/>
<text x="925.5" y="552.8" font-size="6.5" fill="#ffdcb4" text-anchor="middle" >A</text>
<text x="765.5" y="582.3" font-size="10" fill="#ffdcb4" text-anchor="middle" >B15</text>
<text x="811.5" y="582.3" font-size="10" fill="#ffdcb4" text-anchor="middle" >4</text>
<text x="857.0" y="582.3" font-size="10" fill="#ffdcb4" text-anchor="middle" >12</text>
<text x="1002.0" y="582.3" font-size="10" fill="#ffdcb4" text-anchor="middle" >8800</text>
<text x="1055.5" y="582.3" font-size="10" fill="#ffdcb4" text-anchor="middle" >8800</text>
<rect x="895" y="578" width="62" height="1" fill="#00ffff"/>
<text x="925.5" y="576.8" font-size="6.5" fill="#ffdcb4" text-anchor="middle" >A</text>
<text x="765.5" y="606.8" font-size="10" fill="#ffdcb4" text-anchor="middle" >B16</text>
<text x="811.5" y="606.8" font-size="10" fill="#ffdcb4" text-anchor="middle" >2</text>
<text x="857.0" y="606.8" font-size="10" fill="#ffdcb4" text-anchor="middle" >12</text>
<text x="1002.0" y="606.8" font-size="10" fill="#ffdcb4" text-anchor="middle" >4890</text>
<text x="1055.5" y="606.8" font-size="10" fill="#ffdcb4" text-anchor="middle" >4890</text>
<rect x="895" y="603" width="62" height="1" fill="#00ffff"/>
<text x="925.5" y="601.8" font-size="6.5" fill="#ffdcb4" text-anchor="middle" >A</text>
<text x="765.5" y="631.3" font-size="10" fill="#ffdcb4" text-anchor="middle" >B17</text>
<text x="811.5" y="631.3" font-size="10" fill="#ffdcb4" text-anchor="middle" >4</text>
<text x="857.0" y="631.3" font-size="10" fill="#ffdcb4" text-anchor="middle" >12</text>
<text x="1002.0" y="631.3" font-size="10" fill="#ffdcb4" text-anchor="middle" >6940</text>
<text x="1055.5" y="631.3" font-size="10" fill="#ffdcb4" text-anchor="middle" >6940</text>
<rect x="895" y="627" width="62" height="1" fill="#00ffff"/>
<text x="925.5" y="625.8" font-size="6.5" fill="#ffdcb4" text-anchor="middle" >A</text>
<text x="765.5" y="655.8" font-size="10" fill="#ffdcb4" text-anchor="middle" >B18</text>
<text x="811.5" y="655.8" font-size="10" fill="#ffdcb4" text-anchor="middle" >4</text>
<text x="857.0" y="655.8" font-size="10" fill="#ffdcb4" text-anchor="middle" >12</text>
<text x="1002.0" y="655.8" font-size="10" fill="#ffdcb4" text-anchor="middle" >6620</text>
<text x="1055.5" y="655.8" font-size="10" fill="#ffdcb4" text-anchor="middle" >6620</text>
<rect x="895" y="651" width="62" height="1" fill="#00ffff"/>
<text x="925.5" y="649.8" font-size="6.5" fill="#ffdcb4" text-anchor="middle" >A</text>
<text x="765.5" y="680.3" font-size="10" fill="#ffdcb4" text-anchor="middle" >B19</text>
<text x="811.5" y="680.3" font-size="10" fill="#ffdcb4" text-anchor="middle" >4</text>
<text x="857.0" y="680.3" font-size="10" fill="#ffdcb4" text-anchor="middle" >10</text>
<text x="1002.0" y="680.3" font-size="10" fill="#ffdcb4" text-anchor="middle" >3335</text>
<text x="1055.5" y="680.3" font-size="10" fill="#ffdcb4" text-anchor="middle" >3335</text>
<rect x="895" y="676" width="62" height="1" fill="#00ffff"/>
<text x="925.5" y="674.8" font-size="6.5" fill="#ffdcb4" text-anchor="middle" >A</text>
<text x="765.5" y="704.3" font-size="10" fill="#ffdcb4" text-anchor="middle" >S20</text>
<text x="811.5" y="704.3" font-size="10" fill="#ffdcb4" text-anchor="middle" >10</text>
<text x="857.0" y="704.3" font-size="10" fill="#ffdcb4" text-anchor="middle" >8</text>
<text x="1002.0" y="704.3" font-size="10" fill="#ffdcb4" text-anchor="middle" >1495</text>
<text x="1055.5" y="704.3" font-size="10" fill="#ffdcb4" text-anchor="middle" >250</text>
<text x="1101.5" y="704.3" font-size="10" fill="#ffdcb4" text-anchor="middle" >400</text>
<text x="1284.5" y="704.3" font-size="10" fill="#ffdcb4" text-anchor="middle" >32</text>
<rect x="907.5" y="691.5" width="37" height="18" rx="1.5" fill="none" stroke="#00ffff" stroke-width="1"/>
<path d="M908 692 L912 695" stroke="#00ffff" stroke-width="1"/>
<text x="926" y="698.2" font-size="6.5" fill="#ffdcb4" text-anchor="middle" >A</text>
<text x="940.7" y="703.2" font-size="6.5" fill="#ffdcb4" text-anchor="middle" >B</text>
<text x="765.5" y="728.8" font-size="10" fill="#ffdcb4" text-anchor="middle" >S21</text>
<text x="811.5" y="728.8" font-size="10" fill="#ffdcb4" text-anchor="middle" >4</text>
<text x="857.0" y="728.8" font-size="10" fill="#ffdcb4" text-anchor="middle" >8</text>
<text x="1002.0" y="728.8" font-size="10" fill="#ffdcb4" text-anchor="middle" >1495</text>
<text x="1055.5" y="728.8" font-size="10" fill="#ffdcb4" text-anchor="middle" >250</text>
<text x="1101.5" y="728.8" font-size="10" fill="#ffdcb4" text-anchor="middle" >400</text>
<text x="1284.5" y="728.8" font-size="10" fill="#ffdcb4" text-anchor="middle" >32</text>
<rect x="907.5" y="715.5" width="37" height="18" rx="1.5" fill="none" stroke="#00ffff" stroke-width="1"/>
<path d="M908 716 L912 719" stroke="#00ffff" stroke-width="1"/>
<text x="926" y="722.2" font-size="6.5" fill="#ffdcb4" text-anchor="middle" >A</text>
<text x="940.7" y="727.2" font-size="6.5" fill="#ffdcb4" text-anchor="middle" >B</text>
<text x="765.5" y="753.3" font-size="10" fill="#ffdcb4" text-anchor="middle" >S22</text>
<text x="811.5" y="753.3" font-size="10" fill="#ffdcb4" text-anchor="middle" >10</text>
<text x="857.0" y="753.3" font-size="10" fill="#ffdcb4" text-anchor="middle" >8</text>
<text x="1002.0" y="753.3" font-size="10" fill="#ffdcb4" text-anchor="middle" >1495</text>
<text x="1055.5" y="753.3" font-size="10" fill="#ffdcb4" text-anchor="middle" >250</text>
<text x="1101.5" y="753.3" font-size="10" fill="#ffdcb4" text-anchor="middle" >400</text>
<text x="1284.5" y="753.3" font-size="10" fill="#ffdcb4" text-anchor="middle" >32</text>
<rect x="907.5" y="740.5" width="37" height="18" rx="1.5" fill="none" stroke="#00ffff" stroke-width="1"/>
<path d="M908 741 L912 744" stroke="#00ffff" stroke-width="1"/>
<text x="926" y="747.2" font-size="6.5" fill="#ffdcb4" text-anchor="middle" >A</text>
<text x="940.7" y="752.2" font-size="6.5" fill="#ffdcb4" text-anchor="middle" >B</text>
<text x="765.5" y="777.8" font-size="10" fill="#ffdcb4" text-anchor="middle" >S23</text>
<text x="811.5" y="777.8" font-size="10" fill="#ffdcb4" text-anchor="middle" >8</text>
<text x="857.0" y="777.8" font-size="10" fill="#ffdcb4" text-anchor="middle" >8</text>
<text x="1002.0" y="777.8" font-size="10" fill="#ffdcb4" text-anchor="middle" >1495</text>
<text x="1055.5" y="777.8" font-size="10" fill="#ffdcb4" text-anchor="middle" >250</text>
<text x="1101.5" y="777.8" font-size="10" fill="#ffdcb4" text-anchor="middle" >400</text>
<text x="1284.5" y="777.8" font-size="10" fill="#ffdcb4" text-anchor="middle" >32</text>
<rect x="907.5" y="764.5" width="37" height="18" rx="1.5" fill="none" stroke="#00ffff" stroke-width="1"/>
<path d="M908 765 L912 768" stroke="#00ffff" stroke-width="1"/>
<text x="926" y="771.2" font-size="6.5" fill="#ffdcb4" text-anchor="middle" >A</text>
<text x="940.7" y="776.2" font-size="6.5" fill="#ffdcb4" text-anchor="middle" >B</text>
<text x="765.5" y="802.3" font-size="10" fill="#ffdcb4" text-anchor="middle" >S24</text>
<text x="811.5" y="802.3" font-size="10" fill="#ffdcb4" text-anchor="middle" >8</text>
<text x="857.0" y="802.3" font-size="10" fill="#ffdcb4" text-anchor="middle" >8</text>
<text x="1002.0" y="802.3" font-size="10" fill="#ffdcb4" text-anchor="middle" >1495</text>
<text x="1055.5" y="802.3" font-size="10" fill="#ffdcb4" text-anchor="middle" >250</text>
<text x="1101.5" y="802.3" font-size="10" fill="#ffdcb4" text-anchor="middle" >400</text>
<text x="1284.5" y="802.3" font-size="10" fill="#ffdcb4" text-anchor="middle" >32</text>
<rect x="907.5" y="789.5" width="37" height="18" rx="1.5" fill="none" stroke="#00ffff" stroke-width="1"/>
<path d="M908 790 L912 793" stroke="#00ffff" stroke-width="1"/>
<text x="926" y="796.2" font-size="6.5" fill="#ffdcb4" text-anchor="middle" >A</text>
<text x="940.7" y="801.2" font-size="6.5" fill="#ffdcb4" text-anchor="middle" >B</text>
<text x="765.5" y="826.8" font-size="10" fill="#ffdcb4" text-anchor="middle" >S25</text>
<text x="811.5" y="826.8" font-size="10" fill="#ffdcb4" text-anchor="middle" >20</text>
<text x="857.0" y="826.8" font-size="10" fill="#ffdcb4" text-anchor="middle" >8</text>
<text x="1002.0" y="826.8" font-size="10" fill="#ffdcb4" text-anchor="middle" >1495</text>
<text x="1055.5" y="826.8" font-size="10" fill="#ffdcb4" text-anchor="middle" >250</text>
<text x="1101.5" y="826.8" font-size="10" fill="#ffdcb4" text-anchor="middle" >400</text>
<text x="1284.5" y="826.8" font-size="10" fill="#ffdcb4" text-anchor="middle" >32</text>
<rect x="907.5" y="813.5" width="37" height="18" rx="1.5" fill="none" stroke="#00ffff" stroke-width="1"/>
<path d="M908 814 L912 817" stroke="#00ffff" stroke-width="1"/>
<text x="926" y="820.2" font-size="6.5" fill="#ffdcb4" text-anchor="middle" >A</text>
<text x="940.7" y="825.2" font-size="6.5" fill="#ffdcb4" text-anchor="middle" >B</text>
<text x="765.5" y="851.3" font-size="10" fill="#ffdcb4" text-anchor="middle" >S26</text>
<text x="811.5" y="851.3" font-size="10" fill="#ffdcb4" text-anchor="middle" >26</text>
<text x="857.0" y="851.3" font-size="10" fill="#ffdcb4" text-anchor="middle" >8</text>
<text x="1002.0" y="851.3" font-size="10" fill="#ffdcb4" text-anchor="middle" >1495</text>
<text x="1055.5" y="851.3" font-size="10" fill="#ffdcb4" text-anchor="middle" >250</text>
<text x="1101.5" y="851.3" font-size="10" fill="#ffdcb4" text-anchor="middle" >400</text>
<text x="1284.5" y="851.3" font-size="10" fill="#ffdcb4" text-anchor="middle" >32</text>
<rect x="907.5" y="838.5" width="37" height="18" rx="1.5" fill="none" stroke="#00ffff" stroke-width="1"/>
<path d="M908 839 L912 842" stroke="#00ffff" stroke-width="1"/>
<text x="926" y="845.2" font-size="6.5" fill="#ffdcb4" text-anchor="middle" >A</text>
<text x="940.7" y="850.2" font-size="6.5" fill="#ffdcb4" text-anchor="middle" >B</text>
<text x="765.5" y="875.3" font-size="10" fill="#ffdcb4" text-anchor="middle" >S27</text>
<text x="811.5" y="875.3" font-size="10" fill="#ffdcb4" text-anchor="middle" >23</text>
<text x="857.0" y="875.3" font-size="10" fill="#ffdcb4" text-anchor="middle" >8</text>
<text x="1002.0" y="875.3" font-size="10" fill="#ffdcb4" text-anchor="middle" >1495</text>
<text x="1055.5" y="875.3" font-size="10" fill="#ffdcb4" text-anchor="middle" >250</text>
<text x="1101.5" y="875.3" font-size="10" fill="#ffdcb4" text-anchor="middle" >400</text>
<text x="1284.5" y="875.3" font-size="10" fill="#ffdcb4" text-anchor="middle" >32</text>
<rect x="907.5" y="862.5" width="37" height="18" rx="1.5" fill="none" stroke="#00ffff" stroke-width="1"/>
<path d="M908 863 L912 866" stroke="#00ffff" stroke-width="1"/>
<text x="926" y="869.2" font-size="6.5" fill="#ffdcb4" text-anchor="middle" >A</text>
<text x="940.7" y="874.2" font-size="6.5" fill="#ffdcb4" text-anchor="middle" >B</text>
<text x="765.5" y="899.8" font-size="10" fill="#ffdcb4" text-anchor="middle" >S28</text>
<text x="811.5" y="899.8" font-size="10" fill="#ffdcb4" text-anchor="middle" >22</text>
<text x="857.0" y="899.8" font-size="10" fill="#ffdcb4" text-anchor="middle" >8</text>
<text x="1002.0" y="899.8" font-size="10" fill="#ffdcb4" text-anchor="middle" >1495</text>
<text x="1055.5" y="899.8" font-size="10" fill="#ffdcb4" text-anchor="middle" >250</text>
<text x="1101.5" y="899.8" font-size="10" fill="#ffdcb4" text-anchor="middle" >400</text>
<text x="1284.5" y="899.8" font-size="10" fill="#ffdcb4" text-anchor="middle" >32</text>
<rect x="907.5" y="886.5" width="37" height="18" rx="1.5" fill="none" stroke="#00ffff" stroke-width="1"/>
<path d="M908 887 L912 890" stroke="#00ffff" stroke-width="1"/>
<text x="926" y="893.2" font-size="6.5" fill="#ffdcb4" text-anchor="middle" >A</text>
<text x="940.7" y="898.2" font-size="6.5" fill="#ffdcb4" text-anchor="middle" >B</text>
<text x="765.5" y="924.3" font-size="10" fill="#ffdcb4" text-anchor="middle" >S29</text>
<text x="811.5" y="924.3" font-size="10" fill="#ffdcb4" text-anchor="middle" >9</text>
<text x="857.0" y="924.3" font-size="10" fill="#ffdcb4" text-anchor="middle" >8</text>
<text x="1002.0" y="924.3" font-size="10" fill="#ffdcb4" text-anchor="middle" >1495</text>
<text x="1055.5" y="924.3" font-size="10" fill="#ffdcb4" text-anchor="middle" >250</text>
<text x="1101.5" y="924.3" font-size="10" fill="#ffdcb4" text-anchor="middle" >400</text>
<text x="1284.5" y="924.3" font-size="10" fill="#ffdcb4" text-anchor="middle" >32</text>
<rect x="907.5" y="911.5" width="37" height="18" rx="1.5" fill="none" stroke="#00ffff" stroke-width="1"/>
<path d="M908 912 L912 915" stroke="#00ffff" stroke-width="1"/>
<text x="926" y="918.2" font-size="6.5" fill="#ffdcb4" text-anchor="middle" >A</text>
<text x="940.7" y="923.2" font-size="6.5" fill="#ffdcb4" text-anchor="middle" >B</text>
<text x="765.5" y="948.8" font-size="10" fill="#ffdcb4" text-anchor="middle" >S30</text>
<text x="811.5" y="948.8" font-size="10" fill="#ffdcb4" text-anchor="middle" >7</text>
<text x="857.0" y="948.8" font-size="10" fill="#ffdcb4" text-anchor="middle" >8</text>
<text x="1002.0" y="948.8" font-size="10" fill="#ffdcb4" text-anchor="middle" >1495</text>
<text x="1055.5" y="948.8" font-size="10" fill="#ffdcb4" text-anchor="middle" >250</text>
<text x="1101.5" y="948.8" font-size="10" fill="#ffdcb4" text-anchor="middle" >400</text>
<text x="1284.5" y="948.8" font-size="10" fill="#ffdcb4" text-anchor="middle" >32</text>
<rect x="907.5" y="935.5" width="37" height="18" rx="1.5" fill="none" stroke="#00ffff" stroke-width="1"/>
<path d="M908 936 L912 939" stroke="#00ffff" stroke-width="1"/>
<text x="926" y="942.2" font-size="6.5" fill="#ffdcb4" text-anchor="middle" >A</text>
<text x="940.7" y="947.2" font-size="6.5" fill="#ffdcb4" text-anchor="middle" >B</text>
<text x="712.0" y="244.8" font-size="10" fill="#ffdcb4" text-anchor="middle" >B1, B3</text>
<text x="712.0" y="257.45" font-size="10" fill="#ffdcb4" text-anchor="middle" >B4, B5</text>
<text x="712.0" y="270.1" font-size="10" fill="#ffdcb4" text-anchor="middle" >B6, B7</text>
<text x="712.0" y="282.75" font-size="10" fill="#ffdcb4" text-anchor="middle" >B2</text>
<rect x="1429" y="175" width="487" height="1" fill="#bfff00"/>
<rect x="1429" y="224" width="487" height="1" fill="#bfff00"/>
<rect x="1780" y="199" width="136" height="1" fill="#bfff00"/>
<rect x="1429" y="312" width="487" height="1" fill="#bfff00"/>
<rect x="1490" y="248" width="426" height="1" fill="#bfff00"/>
<rect x="1429" y="175" width="1" height="138" fill="#bfff00"/>
<rect x="1490" y="175" width="1" height="138" fill="#bfff00"/>
<rect x="1536" y="175" width="1" height="138" fill="#bfff00"/>
<rect x="1582" y="175" width="1" height="138" fill="#bfff00"/>
<rect x="1628" y="175" width="1" height="138" fill="#bfff00"/>
<rect x="1719" y="175" width="1" height="138" fill="#bfff00"/>
<rect x="1780" y="175" width="1" height="138" fill="#bfff00"/>
<rect x="1826" y="199" width="1" height="114" fill="#bfff00"/>
<rect x="1872" y="199" width="1" height="114" fill="#bfff00"/>
<text x="1460.0" y="192" font-size="11" fill="#00ffff" text-anchor="middle" letter-spacing="-0.4">ELEMENT</text>
<text x="1513.5" y="192" font-size="11" fill="#00ffff" text-anchor="middle" >BAR</text>
<text x="1513.5" y="204" font-size="11" fill="#00ffff" text-anchor="middle" letter-spacing="-0.3">MARK</text>
<text x="1559.5" y="192" font-size="11" fill="#00ffff" text-anchor="middle" >BAR</text>
<text x="1559.5" y="204" font-size="11" fill="#00ffff" text-anchor="middle" letter-spacing="-0.3">NOS.</text>
<text x="1605.5" y="192" font-size="11" fill="#00ffff" text-anchor="middle" letter-spacing="-0.3">REBAR</text>
<text x="1674.0" y="192" font-size="11" fill="#00ffff" text-anchor="middle" >BAR</text>
<text x="1674.0" y="204" font-size="11" fill="#00ffff" text-anchor="middle" letter-spacing="-0.3">SHAPE</text>
<text x="1750.0" y="192" font-size="11" fill="#00ffff" text-anchor="middle" letter-spacing="-0.4">CUTTING</text>
<text x="1750.0" y="204" font-size="11" fill="#00ffff" text-anchor="middle" letter-spacing="-0.4">LENGTH</text>
<text x="1750.0" y="216" font-size="11" fill="#00ffff" text-anchor="middle" >mm</text>
<text x="1870.5" y="192" font-size="11" fill="#00ffff" text-anchor="start" letter-spacing="-0.4">DIMENSIONS (mm)</text>
<text x="1803.5" y="216" font-size="11" fill="#00ffff" text-anchor="middle" >A</text>
<text x="1849.5" y="216" font-size="11" fill="#00ffff" text-anchor="middle" >B</text>
<text x="1895.5" y="216" font-size="11" fill="#00ffff" text-anchor="middle" >C</text>
<text x="1513.5" y="241.3" font-size="10" fill="#ffdcb4" text-anchor="middle" >SR31</text>
<text x="1559.5" y="241.3" font-size="10" fill="#ffdcb4" text-anchor="middle" >5</text>
<text x="1605.5" y="241.3" font-size="10" fill="#ffdcb4" text-anchor="middle" >32</text>
<text x="1750.0" y="241.3" font-size="10" fill="#ffdcb4" text-anchor="middle" >270</text>
<text x="1803.5" y="241.3" font-size="10" fill="#ffdcb4" text-anchor="middle" >270</text>
<rect x="1643" y="236" width="62" height="1" fill="#00ffff"/>
<text x="1673.5" y="234.7" font-size="6.5" fill="#ffdcb4" text-anchor="middle" >A</text>
<text x="1460.0" y="244.8" font-size="10" fill="#ffdcb4" text-anchor="middle" >B1, B3</text>
<text x="1460.0" y="257.45" font-size="10" fill="#ffdcb4" text-anchor="middle" >B4, B5</text>
<text x="1460.0" y="270.1" font-size="10" fill="#ffdcb4" text-anchor="middle" >B6, B7</text>
<text x="1460.0" y="282.75" font-size="10" fill="#ffdcb4" text-anchor="middle" >B2</text>
</g>
<g clip-path="url(#cv2)">
<path d="M4 150.5 L10 147" stroke="#575757" stroke-width="1"/>
<text x="11.5" y="167" font-size="9.5" fill="#ffdcb4" text-anchor="end" >450</text>
<rect x="16" y="165" width="1" height="18" fill="#575757"/>
<rect x="4" y="169" width="12" height="1" fill="#575757"/>
<rect x="10" y="168" width="4" height="3" fill="#575757"/>
<rect x="16" y="175" width="207" height="1" fill="#575757"/>
<rect x="19" y="174" width="5" height="3" fill="#575757"/>
<rect x="217" y="174" width="5" height="3" fill="#575757"/>
<text x="120" y="173" font-size="9.5" fill="#ffdcb4" text-anchor="middle" >3303</text>
<path d="M4 187.5 L7.5 190.5 L7.5 187.5 H23" fill="none" stroke="#ffdcb4" stroke-width="1"/>
<path d="M217 187.5 H232.5 L233.5 184.5 L241 190.5 L241.5 187.5 H257.5" fill="none" stroke="#ffdcb4" stroke-width="1"/>
<path d="M4 288.5 L7.5 291.5 L7.5 288.5 H23" fill="none" stroke="#ffdcb4" stroke-width="1"/>
<path d="M217 288.5 H232.5 L233.5 285.5 L241 291.5 L241.5 288.5 H257.5" fill="none" stroke="#ffdcb4" stroke-width="1"/>
<rect x="16" y="188" width="1" height="36" fill="#ffff00"/>
<rect x="16" y="252" width="1" height="36" fill="#ffff00"/>
<rect x="223" y="188" width="1" height="37" fill="#ffff00"/>
<rect x="223" y="251" width="1" height="37" fill="#ffff00"/>
<rect x="250" y="188" width="1" height="100" fill="#ffff00"/>
<rect x="16" y="195" width="1" height="25" fill="#575757"/>
<text x="46.5" y="196" font-size="9.5" fill="#ffdcb4" text-anchor="middle" >965</text>
<rect x="16" y="199" width="60" height="1" fill="#575757"/>
<rect x="19" y="198" width="5" height="3" fill="#575757"/>
<rect x="69" y="198" width="5" height="3" fill="#575757"/>
<rect x="75" y="195" width="1" height="25" fill="#575757"/>
<rect x="17" y="224" width="207" height="1" fill="#ffff00"/>
<rect x="16" y="251" width="208" height="1" fill="#ffff00"/>
<rect x="4" y="224" width="9" height="1" fill="#ffff00"/>
<rect x="4" y="251" width="9" height="1" fill="#ffff00"/>
<rect x="12" y="224" width="1" height="28" fill="#ffff00"/>
<rect x="228.5" y="224.5" width="18" height="27" fill="none" stroke="#ffff00" stroke-width="1"/>
<rect x="4" y="226" width="243" height="1" fill="#00ffff"/>
<rect x="246" y="226" width="1" height="10" fill="#00ffff"/>
<rect x="66" y="225" width="20" height="3" fill="#00ffff"/>
<rect x="4" y="249" width="229" height="1" fill="#00ffff"/>
<rect x="20" y="248" width="19" height="3" fill="#00ffff"/>
<rect x="19" y="227" width="1" height="24" fill="#a8789c"/>
<rect x="154" y="227" width="1" height="24" fill="#a8789c"/>
<rect x="220" y="227" width="1" height="24" fill="#a8789c"/>
<rect x="237" y="150" width="1" height="10" fill="#575757"/>
<rect x="237" y="175" width="1" height="4" fill="#575757"/>
<rect x="237" y="188" width="1" height="15" fill="#575757"/>
<rect x="237" y="212" width="1" height="4" fill="#575757"/>
<rect x="237" y="224" width="1" height="17" fill="#575757"/>
<rect x="237" y="249" width="1" height="3" fill="#575757"/>
<rect x="237" y="261" width="1" height="16" fill="#575757"/>
<rect x="237" y="297" width="1" height="16" fill="#575757"/>
<path d="M229.5 147 A10.4 10.4 0 0 0 244.5 147" fill="none" stroke="#575757" stroke-width="1"/>
<text x="237.5" y="167" font-size="9.5" fill="#ffdcb4" text-anchor="middle" >450</text>
<rect x="223" y="169" width="29" height="1" fill="#575757"/>
<rect x="226" y="168" width="5" height="3" fill="#575757"/>
<rect x="244" y="168" width="5" height="3" fill="#575757"/>
<rect x="223" y="164" width="1" height="20" fill="#575757"/>
<rect x="251" y="165" width="1" height="18" fill="#575757"/>
<text transform="translate(275.5,226) rotate(-90)" font-size="9.5" fill="#ffdcb4" textLength="79" lengthAdjust="spacingAndGlyphs">576(ANCHORAGE</text>
<rect x="247" y="232" width="25" height="1" fill="#575757"/>
<rect x="271" y="225" width="1" height="8" fill="#575757"/>
<rect x="248" y="231" width="4" height="3" fill="#575757"/>
<rect x="94" y="211" width="1" height="13" fill="#575757"/>
<rect x="94" y="211" width="8" height="1" fill="#575757"/>
<rect x="93" y="219" width="3" height="4" fill="#575757"/>
<text x="102.5" y="215" font-size="9.5" fill="#ffdcb4" text-anchor="start" textLength="64" lengthAdjust="spacingAndGlyphs">T12-3NOS-T12</text>
<rect x="56" y="251" width="1" height="14" fill="#575757"/>
<rect x="56" y="264" width="8" height="1" fill="#575757"/>
<rect x="55" y="253" width="3" height="4" fill="#575757"/>
<text x="64" y="268" font-size="9.5" fill="#ffdcb4" text-anchor="start" textLength="64" lengthAdjust="spacingAndGlyphs">B19-4NOS-T10</text>
<text x="228" y="265" font-size="9.5" fill="#ffdcb4" text-anchor="middle" >150</text>
<rect x="211" y="268" width="35" height="1" fill="#575757"/>
<rect x="216" y="267" width="4" height="3" fill="#575757"/>
<rect x="233" y="267" width="4" height="3" fill="#575757"/>
<rect x="220" y="256" width="1" height="88" fill="#575757"/>
<rect x="232" y="254" width="1" height="20" fill="#575757"/>
<rect x="19" y="256" width="1" height="61" fill="#575757"/>
<rect x="154" y="256" width="1" height="88" fill="#575757"/>
<rect x="19" y="311" width="202" height="1" fill="#575757"/>
<rect x="20" y="310" width="6" height="3" fill="#575757"/>
<rect x="148" y="310" width="12" height="3" fill="#575757"/>
<rect x="214" y="310" width="6" height="3" fill="#575757"/>
<text x="43.5" y="309" font-size="9.5" fill="#ffdcb4" text-anchor="start" textLength="88" lengthAdjust="spacingAndGlyphs">S29-9NOS-T8-@235</text>
<text x="143.5" y="309" font-size="9.5" fill="#ffdcb4" text-anchor="start" textLength="88" lengthAdjust="spacingAndGlyphs">S30-7NOS-T8-@165</text>
<text x="187.5" y="336" font-size="9.5" fill="#ffdcb4" text-anchor="middle" >1128</text>
<rect x="154" y="339" width="67" height="1" fill="#575757"/>
<rect x="156" y="338" width="5" height="3" fill="#575757"/>
<rect x="214" y="338" width="5" height="3" fill="#575757"/>
<text x="4.3" y="348" font-size="10" fill="#00ffff" text-anchor="start" font-weight="bold">8</text>
<text x="231" y="347.6" font-size="9.5" fill="#00ffff" text-anchor="start" >C9</text>
<text x="84.5" y="361.6" font-size="13" fill="#00ffff" text-anchor="start" textLength="71.5" lengthAdjust="spacingAndGlyphs">B7:300x450</text>
<rect x="83" y="363" width="75" height="1" fill="#00ffff"/>
<text x="58.5" y="374.7" font-size="8.2" fill="#ffdcb4" text-anchor="start" textLength="123" lengthAdjust="spacingAndGlyphs">(SCALE: H - 1:50 : V - 1:50)</text>
<rect x="58" y="375" width="124" height="1" fill="#ffdcb4"/>
</g>
</svg></body></html>
